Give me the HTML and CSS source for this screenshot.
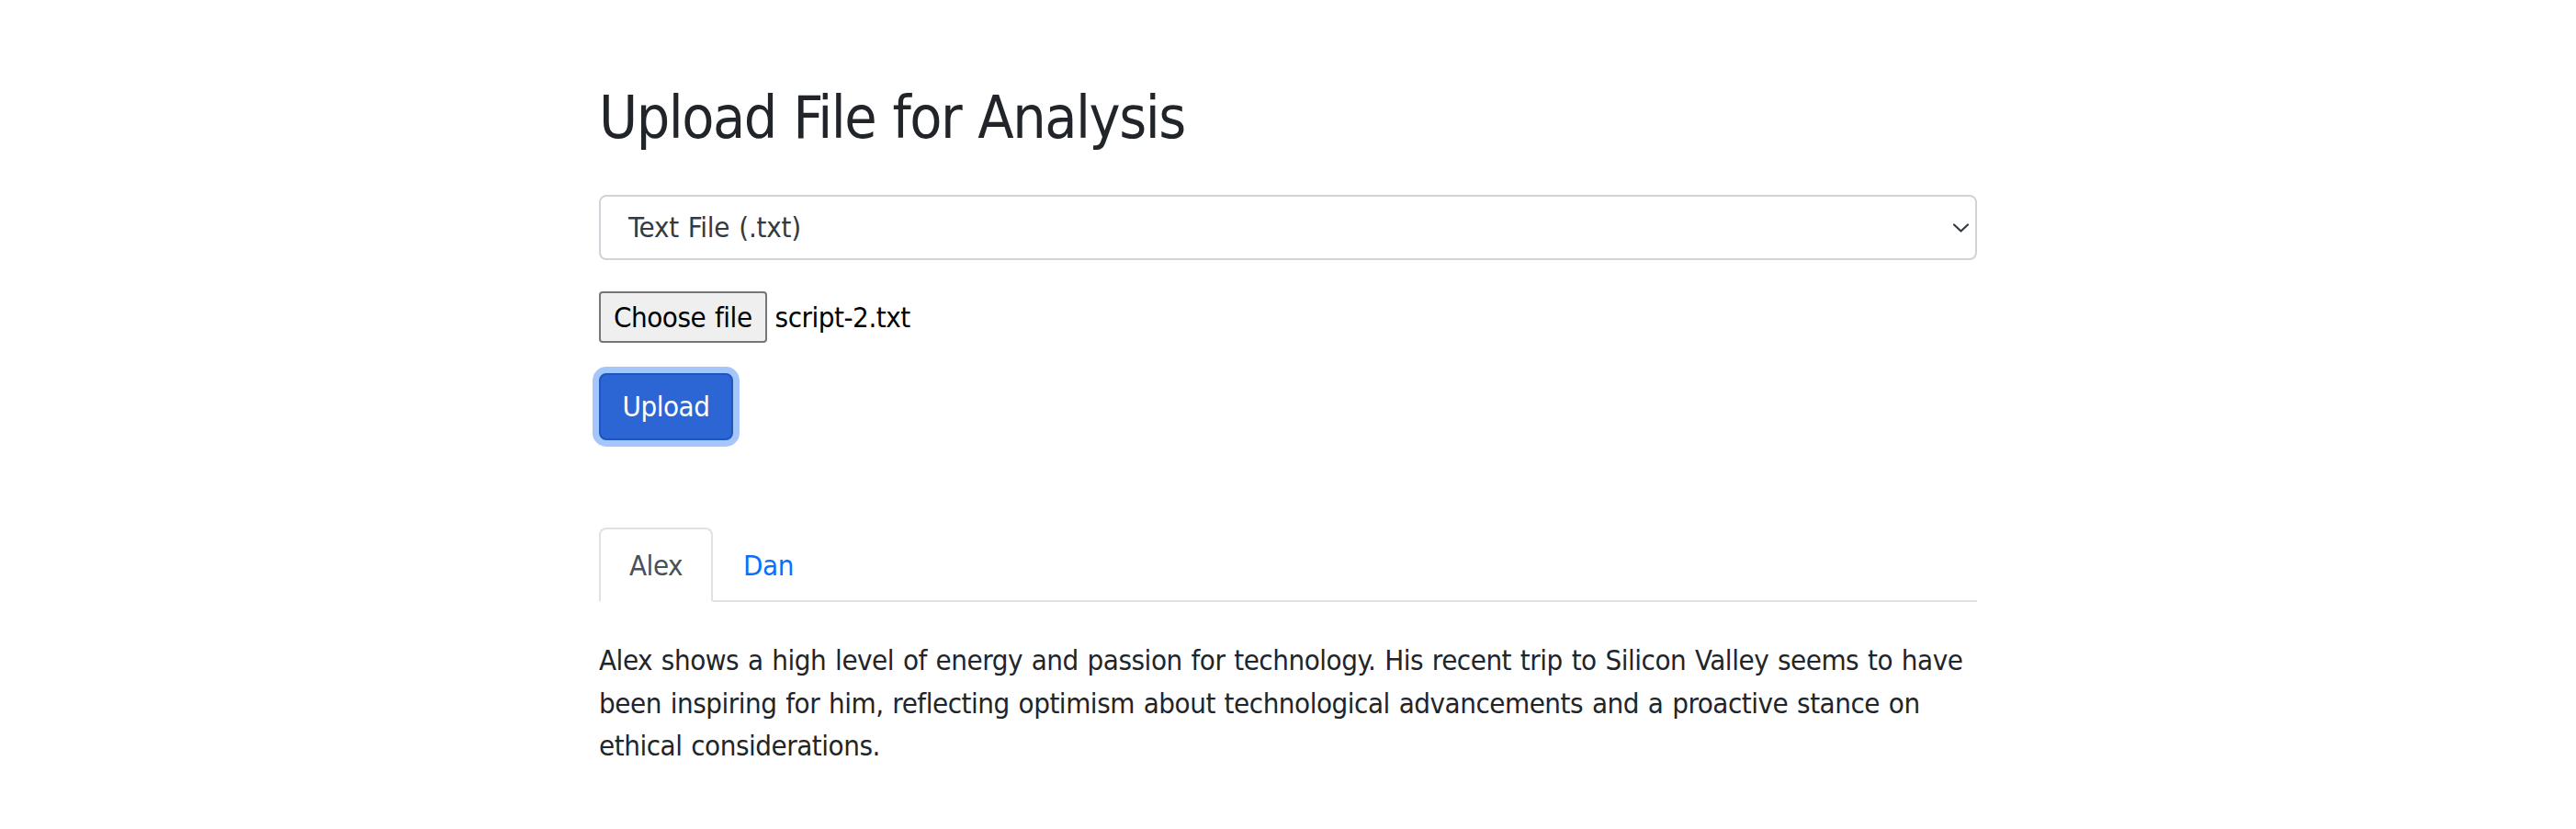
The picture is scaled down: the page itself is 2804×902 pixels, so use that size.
FILE: index.html
```html
<!DOCTYPE html>
<html lang="en">
<head>
<meta charset="utf-8">
<title>Upload File for Analysis</title>
<link rel="stylesheet" href="styles.css">
</head>
<body>
<main class="container">
  <h2 class="title">Upload File for Analysis</h2>
  <div class="select">
    <span class="select-text">Text File (.txt)</span>
    <svg class="chevron" width="17" height="10" viewBox="0 0 17 10"><polyline points="1,1.5 8.5,8.5 16,1.5" fill="none" stroke="#343a40" stroke-width="2.2" stroke-linecap="round" stroke-linejoin="round"/></svg>
  </div>
  <div class="file-row">
    <span class="file-btn">Choose file</span>
    <span class="file-name">script-2.txt</span>
  </div>
  <button class="upload" type="button">Upload</button>
  <ul class="tabs">
    <li class="tab active">Alex</li>
    <li class="tab link">Dan</li>
  </ul>
  <p class="desc">Alex shows a high level of energy and passion for technology. His recent trip to Silicon Valley seems to have been inspiring for him, reflecting optimism about technological advancements and a proactive stance on ethical considerations.</p>
</main>
</body>
</html>
```
FILE: styles.css
```css
html, body {
  margin: 0;
  padding: 0;
  background: #fff;
}
body {
  font-family: "DejaVu Sans Condensed", "DejaVu Sans", sans-serif;
  font-size: 31px;
  line-height: 46.5px;
  letter-spacing: -0.015em;
  word-spacing: 0.045em;
  color: #212529;
}
.container {
  width: 1500px;
  margin: 0 auto;
  padding-top: 90px;
}
.title {
  margin: 0;
  font-size: 64px;
  line-height: 76px;
  font-weight: 400;
  letter-spacing: -0.023em;
  color: #212529;
}
.select {
  margin-top: 46px;
  box-sizing: border-box;
  height: 71px;
  border: 2px solid #ced4da;
  border-radius: 8px;
  display: flex;
  align-items: center;
  justify-content: space-between;
  padding: 0 7px 0 30px;
  color: #343a40;
}
.select-text {
  letter-spacing: -0.008em;
}
.chevron {
  display: block;
}
.file-row {
  margin-top: 34px;
  display: flex;
  align-items: center;
  gap: 9px;
  color: #000;
}
.file-btn {
  box-sizing: border-box;
  height: 56px;
  padding: 8px 14px;
  line-height: 36px;
  background: #efefef;
  border: 2px solid #767676;
  border-radius: 4px;
}
.upload {
  display: block;
  margin-top: 33px;
  box-sizing: border-box;
  width: 146px;
  height: 73px;
  padding: 0;
  font-family: inherit;
  font-size: 31px;
  line-height: 46.5px;
  letter-spacing: inherit;
  color: #fff;
  background: #2c66d4;
  border: 2px solid #1f55bd;
  border-radius: 8px;
  box-shadow: 0 0 0 7px #a4c6fa;
}
.tabs {
  list-style: none;
  margin: 95px 0 0;
  padding: 0;
  display: flex;
  border-bottom: 2px solid #dee2e6;
}
.tab {
  padding: 15.5px 31px 14.5px;
  margin-bottom: -2px;
  border: 2px solid transparent;
  border-radius: 8px 8px 0 0;
}
.tab.active {
  color: #495057;
  border-color: #dee2e6 #dee2e6 #fff;
  background: #fff;
}
.tab.link {
  color: #0d6efd;
}
.desc {
  margin: 40.5px 0 0;
}
```
